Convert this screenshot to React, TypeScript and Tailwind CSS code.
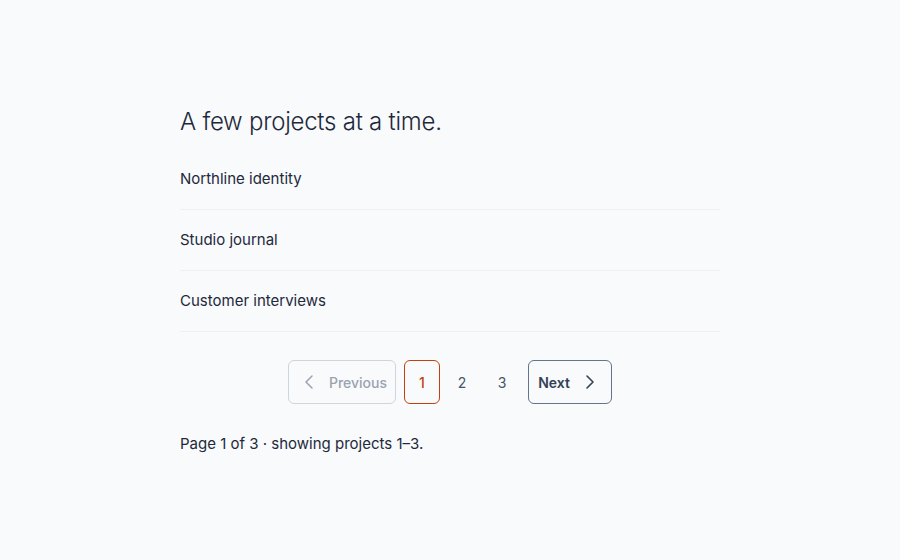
import { ChevronLeft, ChevronRight } from 'lucide-react';

const projects = ['Northline identity', 'Studio journal', 'Customer interviews'];

export default function App() {
  return (
    <div className="min-h-[560px] bg-[#f8fafc] font-['Inter',sans-serif] text-[#1e293b]">
      <div className="mx-auto w-[540px] pt-[106px]">
        <h1 className="text-[24px] font-light leading-[32px] tracking-[-0.01em] text-[#1e293b]">
          A few projects at a time.
        </h1>

        <ul className="mt-[11px]">
          {projects.map((p) => (
            <li key={p} className="flex h-[61px] items-center border-b border-[#edf0f4] text-[15px]">
              {p}
            </li>
          ))}
        </ul>

        <nav className="mt-7 flex items-center justify-center gap-2">
          <button
            type="button"
            disabled
            className="flex h-11 w-[108px] items-center justify-center gap-2 rounded-md border border-[#cfd5dd] text-[14px] font-medium text-[#9aa3af]"
          >
            <ChevronLeft className="h-6 w-6" strokeWidth={1.5} />
            Previous
          </button>
          <div className="flex items-center gap-1">
            <button
              type="button"
              className="flex h-11 w-9 items-center justify-center rounded-md border border-[#c2410c] text-[14px] font-medium text-[#c2410c]"
            >
              1
            </button>
            <button type="button" className="flex h-11 w-9 items-center justify-center rounded-md text-[14px] text-[#475569]">
              2
            </button>
            <button type="button" className="flex h-11 w-9 items-center justify-center rounded-md text-[14px] text-[#475569]">
              3
            </button>
          </div>
          <button
            type="button"
            className="flex h-11 w-[84px] items-center justify-center gap-2 rounded-md border border-[#64748b] text-[14px] font-semibold text-[#334155]"
          >
            Next
            <ChevronRight className="h-6 w-6" strokeWidth={1.6} />
          </button>
        </nav>

        <p className="mt-7 text-[15px] leading-6 text-[#1e293b]">Page 1 of 3 · showing projects 1–3.</p>
      </div>
    </div>
  );
}
